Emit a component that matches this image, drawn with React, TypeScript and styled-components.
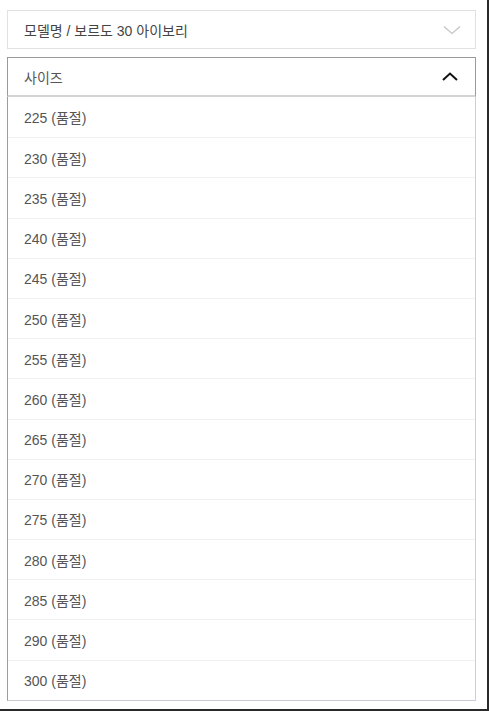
import React from "react";
import styled, { createGlobalStyle } from "styled-components";

const Global = createGlobalStyle`
  html, body { margin: 0; padding: 0; background: #fff; }
  body { font-family: "Liberation Sans", "Noto Sans CJK KR", sans-serif; }
`;

const Frame = styled.div`
  box-sizing: border-box;
  width: 489px;
  height: 711px;
  border-right: 2px solid #2a2a2a;
  border-bottom: 2px solid #2a2a2a;
  padding: 10px 11px 0 7px;
  display: flex;
  flex-direction: column;
  gap: 8px;
  overflow: hidden;
`;

const SelectBox = styled.div`
  box-sizing: border-box;
  height: 39px;
  border: 1px solid #e1e1e4;
  display: flex;
  align-items: center;
  justify-content: space-between;
  padding: 0 14px 0 16px;
  font-size: 14px;
  color: #444;
`;

const Dropdown = styled.div`
  display: flex;
  flex-direction: column;
`;

const Header = styled.div`
  box-sizing: border-box;
  height: 40px;
  border: 1px solid #9a9a9a;
  border-bottom: 2px solid #d4d4d4;
  display: flex;
  align-items: center;
  justify-content: space-between;
  padding: 0 17px 0 16px;
  font-size: 14px;
  color: #555;
`;

const List = styled.ul`
  list-style: none;
  margin: 0;
  padding: 0;
  border-left: 1px solid #9c9c9c;
  border-right: 1px solid #d0d0d4;
  border-bottom: 1px solid #c9ccd3;
`;

const Item = styled.li`
  box-sizing: border-box;
  height: 40.2px;
  display: flex;
  align-items: center;
  padding-left: 16px;
  font-size: 14px;
  color: #555;
  & + & {
    border-top: 1px solid #f0f0f0;
  }
`;

const ChevronDown = () => (
  <svg width="18" height="10" viewBox="0 0 18 10" fill="none">
    <path d="M1 1.5 L9 8.5 L17 1.5" stroke="#c4c4c8" strokeWidth="1.2" />
  </svg>
);

const ChevronUp = () => (
  <svg width="16" height="9" viewBox="0 0 16 9" fill="none">
    <path d="M1 8 L8 1.5 L15 8" stroke="#111" strokeWidth="2" />
  </svg>
);

const sizes = [225, 230, 235, 240, 245, 250, 255, 260, 265, 270, 275, 280, 285, 290, 300];

export default function App() {
  return (
    <>
      <Global />
      <Frame>
        <SelectBox>
          <span>모델명 / 보르도 30 아이보리</span>
          <ChevronDown />
        </SelectBox>
        <Dropdown>
          <Header>
            <span>사이즈</span>
            <ChevronUp />
          </Header>
          <List>
            {sizes.map((s) => (
              <Item key={s}>{s} (품절)</Item>
            ))}
          </List>
        </Dropdown>
      </Frame>
    </>
  );
}
